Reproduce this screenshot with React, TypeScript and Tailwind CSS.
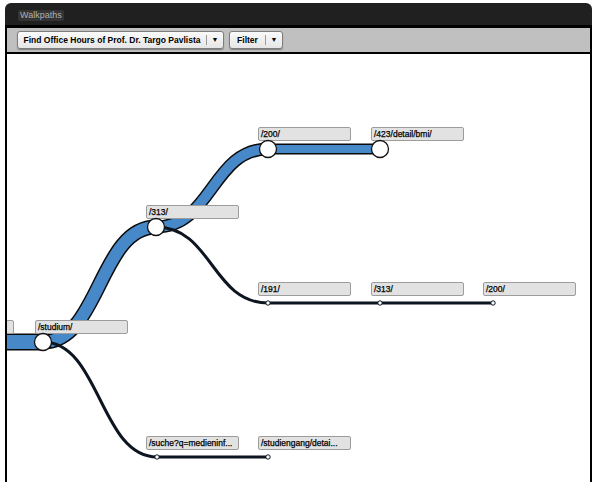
const BLUE = "#4688c8";
const INK = "#0d1520";

type Label = { x: number; y: number; text: string };

// labels sit 10px left of and 22px above their node
const labels: Label[] = [
  { x: -79, y: 320, text: "" },
  { x: 35, y: 320, text: "/studium/" },
  { x: 146, y: 205, text: "/313/" },
  { x: 258, y: 127, text: "/200/" },
  { x: 371, y: 127, text: "/423/detail/bmi/" },
  { x: 258, y: 282, text: "/191/" },
  { x: 371, y: 282, text: "/313/" },
  { x: 483, y: 282, text: "/200/" },
  { x: 146, y: 436, text: "/suche?q=medieninf..." },
  { x: 258, y: 436, text: "/studiengang/detai..." },
];

function curve(x1: number, y1: number, x2: number, y2: number) {
  const m = (x1 + x2) / 2;
  return `M${x1} ${y1} C${m} ${y1} ${m} ${y2} ${x2} ${y2}`;
}

const bands = [
  { d: "M0 342 H43", w: 14 },
  { d: curve(43, 342, 156, 227), w: 12 },
  { d: curve(156, 227, 268, 149), w: 10 },
  { d: "M268 149 H380", w: 8 },
];

const trails = [
  curve(156, 227, 268, 303) + " H493",
  curve(43, 342, 157, 457) + " H268",
];

const bigNodes = [
  [43, 342],
  [156, 227],
  [268, 149],
  [380, 149],
];

const smallNodes = [
  [268, 303],
  [380, 303],
  [493, 303],
  [157, 457],
  [268, 457],
];

function ToolButton({ label, width }: { label: string; width: string }) {
  return (
    <div className="flex h-[18px] items-stretch rounded-[3px] border border-[#7d7d7d] bg-gradient-to-b from-[#fafafa] to-[#e6e6e6] shadow-[0_1px_1px_rgba(0,0,0,0.35)]">
      <div className={`${width} flex items-center justify-center text-[8.5px] font-bold text-black`}>
        {label}
      </div>
      <div className="my-[3px] w-px bg-[#9a9a9a]" />
      <div className="flex w-[16px] items-center justify-center text-[7px] text-black">▼</div>
    </div>
  );
}

export default function App() {
  return (
    <div className="h-[482px] w-[600px] overflow-hidden bg-white pt-[3px] font-['Liberation_Sans',Arial,sans-serif]">
      <div className="ml-[5px] flex h-[479px] w-[587px] flex-col">
        <header className="flex h-[25px] items-center rounded-t-[6px] border-b-[3px] border-black bg-[#202020] pl-[13px] pt-[2px]">
          <span className="rounded-[2px] bg-[#343434] px-[2px] text-[9px] leading-[11px] text-[#b0b0b0]">
            Walkpaths
          </span>
        </header>

        <div className="flex flex-1 flex-col border-x-2 border-black">
          <nav className="flex h-[26px] items-center gap-[5px] border-b-2 border-black bg-[#c0c0c0] pl-[10px]">
            <ToolButton label="Find Office Hours of Prof. Dr. Targo Pavlista" width="w-[188px]" />
            <ToolButton label="Filter" width="w-[35px]" />
          </nav>

          <div className="relative flex-1 overflow-hidden bg-white">
            <svg width="583" height="426" viewBox="7 54 583 426" className="block">
              {bands.map((b, i) => (
                <path key={"o" + i} d={b.d} fill="none" stroke="#0a0a0a" strokeWidth={b.w + 3} />
              ))}
              {bands.map((b, i) => (
                <path key={"b" + i} d={b.d} fill="none" stroke={BLUE} strokeWidth={b.w} />
              ))}
              {trails.map((d, i) => (
                <path key={"t" + i} d={d} fill="none" stroke={INK} strokeWidth={3} />
              ))}

              {labels.map((l, i) => (
                <g key={"l" + i}>
                  <rect
                    x={l.x + 0.5}
                    y={l.y + 0.5}
                    width={92}
                    height={13}
                    rx={1.5}
                    fill="#e2e2e2"
                    stroke="#9c9c9c"
                  />
                  {l.text && (
                    <text
                      x={l.x + 3}
                      y={l.y + 10}
                      fontSize={8.5}
                      fontFamily="'Liberation Sans', Arial, sans-serif"
                      fill="#000"
                      stroke="#000"
                      strokeWidth={0.25}
                    >
                      {l.text}
                    </text>
                  )}
                </g>
              ))}

              {bigNodes.map(([x, y], i) => (
                <circle key={"n" + i} cx={x} cy={y} r={8.5} fill="#fff" stroke="#111" strokeWidth={1.3} />
              ))}
              {smallNodes.map(([x, y], i) => (
                <circle key={"s" + i} cx={x} cy={y} r={2.2} fill="#fff" stroke={INK} strokeWidth={1} />
              ))}
            </svg>
          </div>
        </div>
      </div>
    </div>
  );
}
